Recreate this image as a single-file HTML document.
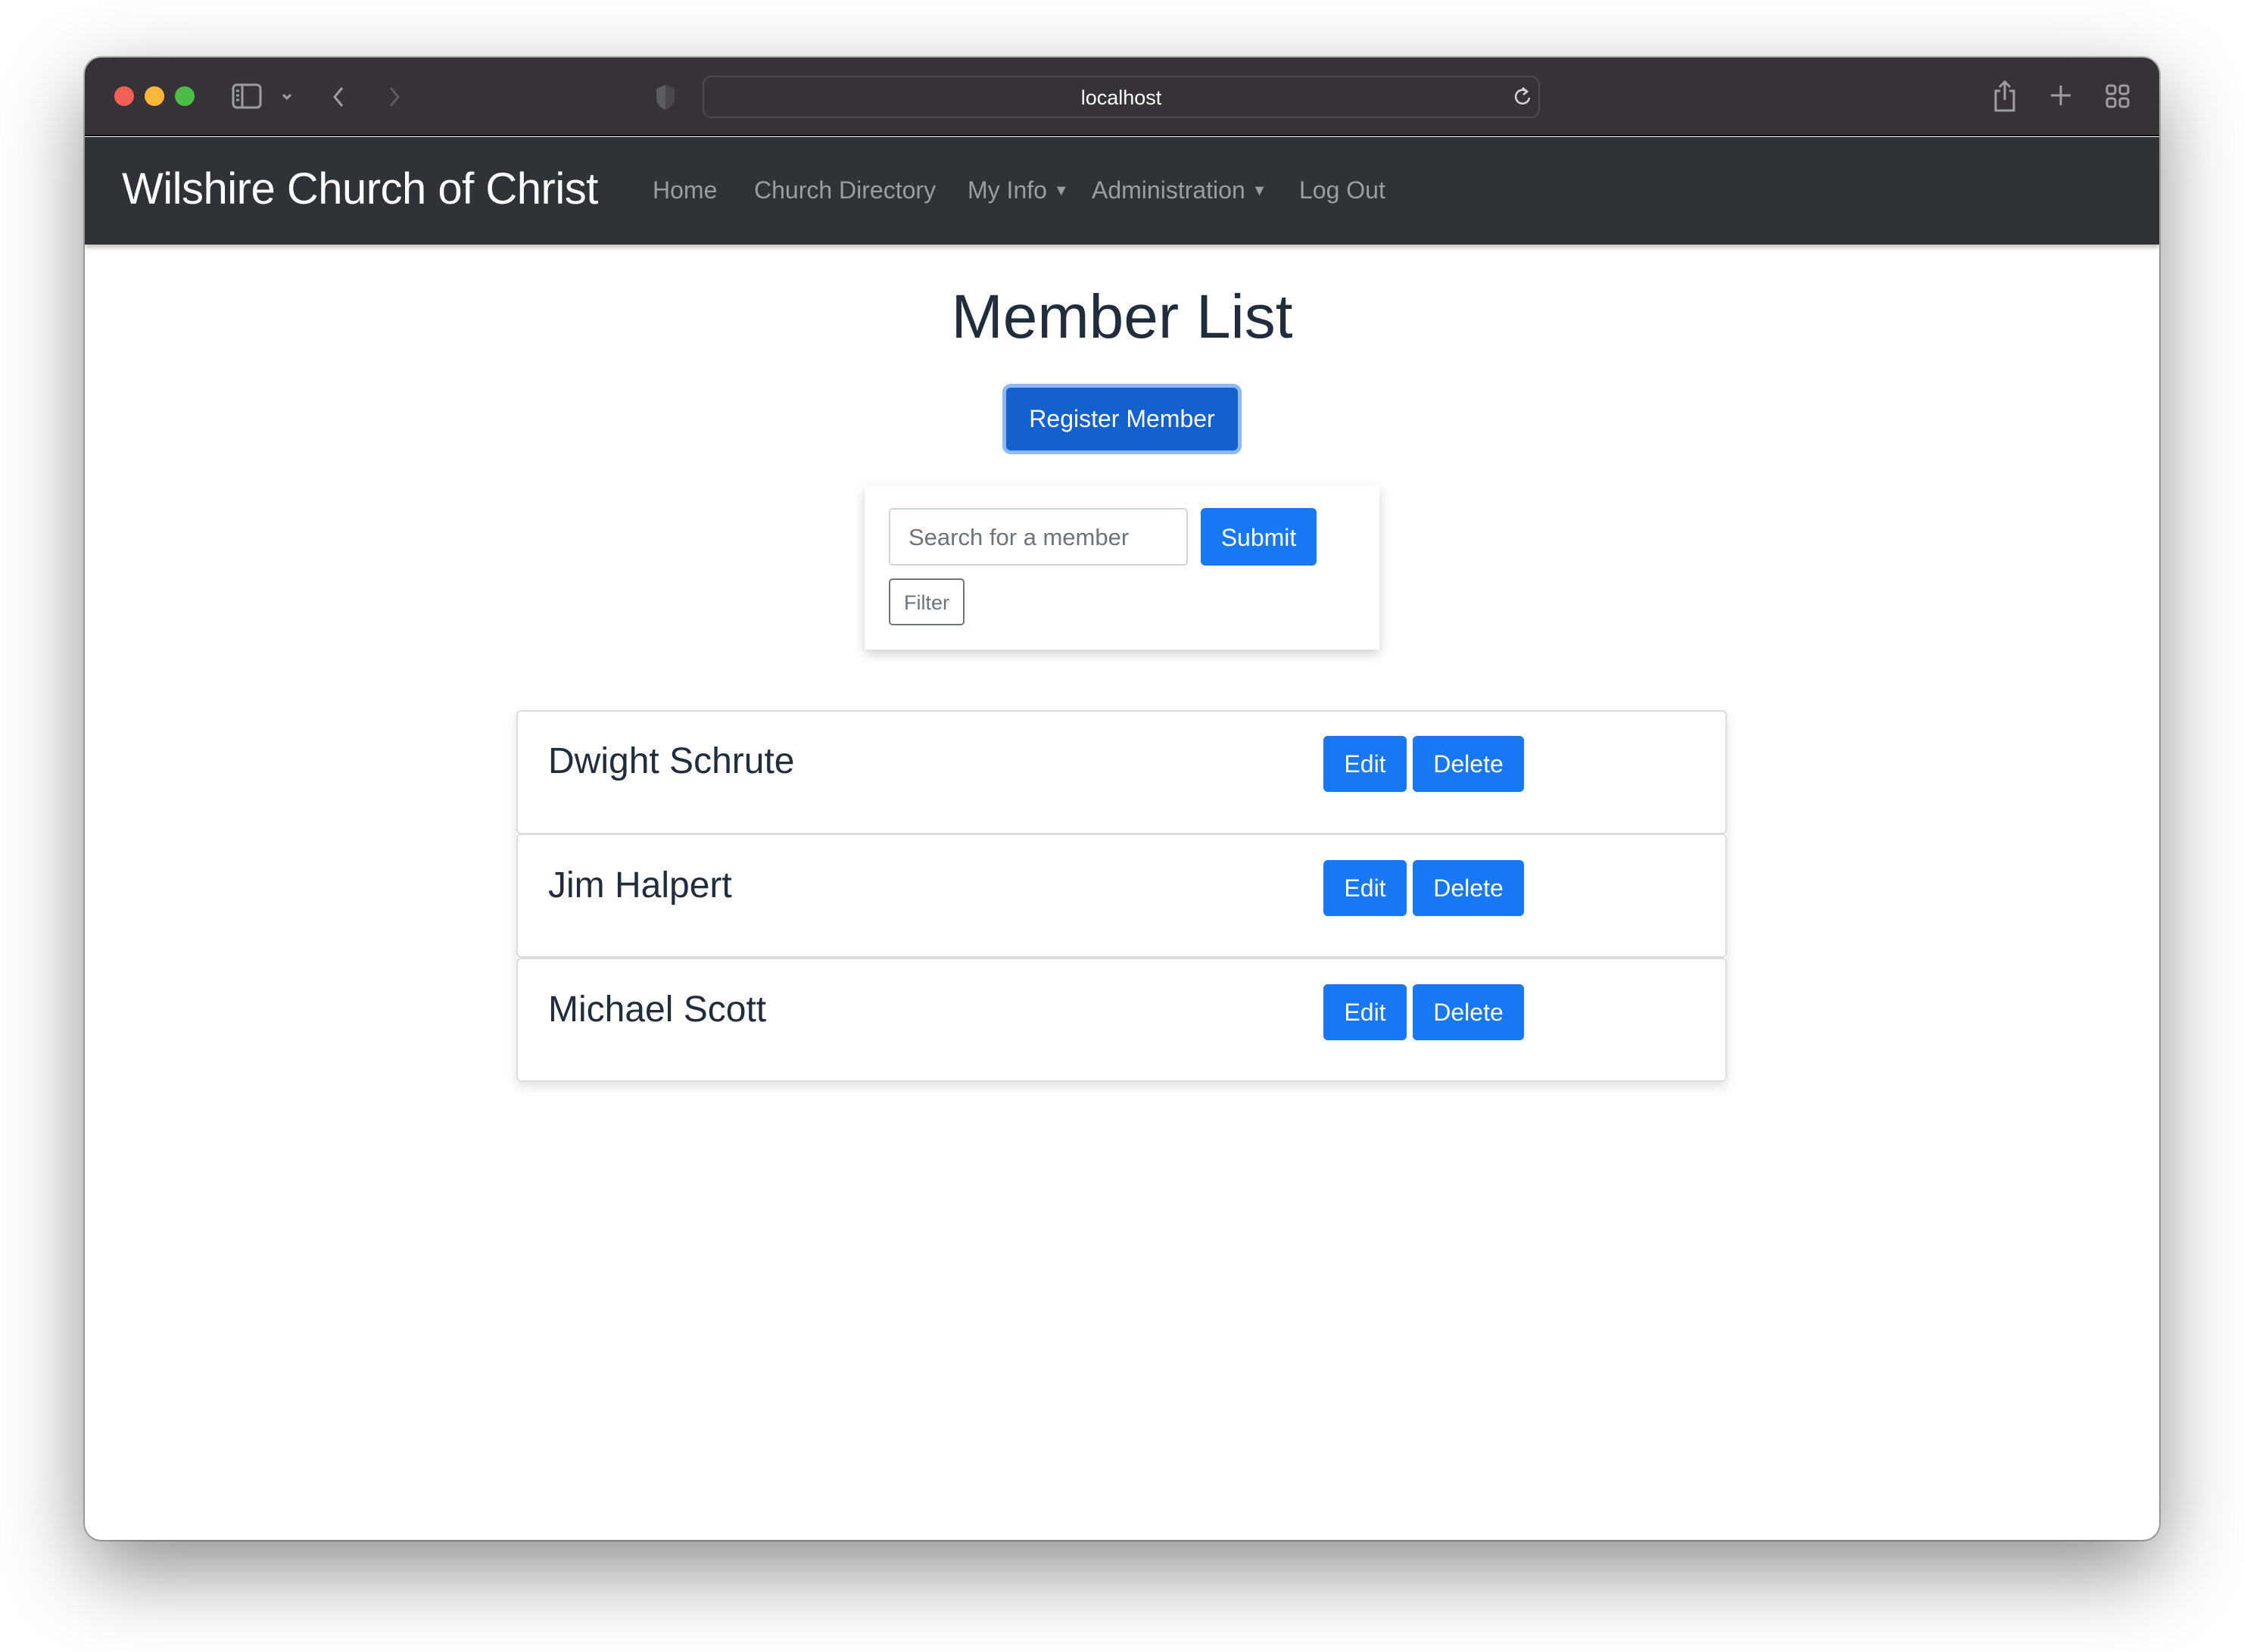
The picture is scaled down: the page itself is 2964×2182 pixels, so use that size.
<!DOCTYPE html>
<html><head><meta charset="utf-8"><style>
*{margin:0;padding:0;box-sizing:border-box}
html,body{width:2964px;height:2182px;overflow:hidden;background:#fff;font-family:"Liberation Sans",sans-serif}
.win{position:absolute;left:112px;top:76px;width:2740px;height:1958px;border-radius:22px;overflow:hidden;background:#fff;box-shadow:0 40px 110px rgba(0,0,0,.45),0 0 0 2px rgba(0,0,0,.25)}
.tb{position:absolute;left:0;top:0;width:100%;height:104px;background:#363238;border-bottom:2px solid #111}
.nav{position:absolute;left:0;top:105px;width:100%;height:142px;background:#2f3236;box-shadow:0 4px 6px rgba(0,0,0,.25)}
.a{position:absolute}
.dot{position:absolute;top:114px;width:26px;height:26px;border-radius:50%}
.navl{position:absolute;top:233px;font-size:32px;color:#9a9da1;white-space:nowrap}
.btn{position:absolute;background:#1877f2;color:#fff;border-radius:6px;display:flex;align-items:center;justify-content:center;font-size:32px}
.card{position:absolute;left:682px;width:1599px;height:164px;border:2px solid #dcdcdc;border-radius:6px;background:#fff}
.name{position:absolute;left:724px;font-size:48px;color:#212d3d}
</style></head><body>
<div class="win">
<div class="tb"></div>
<div class="nav"></div>
</div>
<div class="dot" style="left:151px;background:#f25f56"></div>
<div class="dot" style="left:191px;background:#fbb73a"></div>
<div class="dot" style="left:231px;background:#4bbd45"></div>
<svg class="a" style="left:300px;top:108px" width="140" height="40" viewBox="0 0 140 40" fill="none" stroke="#a09ca3" stroke-width="3">
<rect x="8" y="4" width="36" height="30" rx="5"/><line x1="20" y1="4" x2="20" y2="34"/>
<line x1="12" y1="12" x2="16" y2="12"/><line x1="12" y1="18" x2="16" y2="18"/><line x1="12" y1="24" x2="16" y2="24"/>
<polyline points="74,17 79,22 84,17"/>
</svg>
<svg class="a" style="left:430px;top:108px" width="110" height="40" viewBox="0 0 110 40" fill="none" stroke-width="3">
<polyline points="22,8 12,20 22,32" stroke="#a09ca3"/>
<polyline points="86,8 96,20 86,32" stroke="#5f5b62"/>
</svg>
<svg class="a" style="left:864px;top:108px" width="30" height="40" viewBox="0 0 30 40"><path d="M15 4 L27 9 V22 C27 30 20 35 15 37 C10 35 3 30 3 22 V9 Z" fill="#5e5a61"/><path d="M15 4 L27 9 V22 C27 30 20 35 15 37 Z" fill="#4a464d"/></svg>
<div class="a" style="left:928px;top:100px;width:1106px;height:56px;border:2px solid #4e4a51;border-radius:12px"></div>
<div class="a" style="left:928px;top:114px;width:1106px;text-align:center;font-size:27px;color:#fff">localhost</div>
<svg class="a" style="left:1996px;top:112px" width="30" height="32" viewBox="0 0 30 32" fill="none" stroke="#d9d6db" stroke-width="2.5"><path d="M21 9 A9 9 0 1 0 24 17"/><polyline points="15,4 21,9 16,13"/></svg>
<svg class="a" style="left:2630px;top:104px" width="36" height="46" viewBox="0 0 36 46" fill="none" stroke="#a09ca3" stroke-width="3"><path d="M12 16 H6 V42 H30 V16 H24"/><line x1="18" y1="4" x2="18" y2="28"/><polyline points="11,11 18,4 25,11"/></svg>
<svg class="a" style="left:2706px;top:110px" width="32" height="32" viewBox="0 0 32 32" stroke="#a09ca3" stroke-width="3"><line x1="16" y1="3" x2="16" y2="29"/><line x1="3" y1="16" x2="29" y2="16"/></svg>
<svg class="a" style="left:2780px;top:110px" width="34" height="34" viewBox="0 0 34 34" fill="none" stroke="#a09ca3" stroke-width="3"><rect x="3" y="3" width="11" height="11" rx="3"/><rect x="20" y="3" width="11" height="11" rx="3"/><rect x="3" y="20" width="11" height="11" rx="3"/><rect x="20" y="20" width="11" height="11" rx="3"/></svg>
<div class="a" style="left:161px;top:216px;font-size:58px;color:#fff;white-space:nowrap;letter-spacing:-0.5px">Wilshire Church of Christ</div>
<div class="navl" style="left:862px">Home</div>
<div class="navl" style="left:996px">Church Directory</div>
<div class="navl" style="left:1278px">My Info <span style="font-size:20px;vertical-align:4px">▼</span></div>
<div class="navl" style="left:1442px">Administration <span style="font-size:20px;vertical-align:4px">▼</span></div>
<div class="navl" style="left:1716px">Log Out</div>
<div class="a" style="left:0;width:2964px;top:372px;text-align:center;font-size:82px;color:#212d3d">Member List</div>
<div class="btn" style="left:1329px;top:512px;width:306px;height:83px;background:#1560cf;box-shadow:0 0 0 5px #8fb9f5">Register Member</div>
<div class="a" style="left:1142px;top:641px;width:680px;height:217px;background:#fff;box-shadow:0 6px 14px rgba(0,0,0,.18)"></div>
<div class="a" style="left:1174px;top:671px;width:395px;height:76px;border:2px solid #ced4da;border-radius:5px;font-size:31px;color:#6c737a;padding:19px 0 0 24px">Search for a member</div>
<div class="btn" style="left:1586px;top:671px;width:153px;height:76px;font-size:32px;padding-top:2px">Submit</div>
<div class="a" style="left:1174px;top:764px;width:100px;height:62px;border:2px solid #6c757d;border-radius:5px;font-size:27px;color:#6c757d;text-align:center;line-height:60px">Filter</div>
<div class="a" style="left:682px;top:938px;width:1599px;height:491px;box-shadow:0 6px 14px rgba(0,0,0,.12)"></div>
<div class="card" style="top:938px"></div>
<div class="card" style="top:1101px"></div>
<div class="card" style="top:1265px"></div>
<div class="name" style="top:978px">Dwight Schrute</div>
<div class="name" style="top:1142px">Jim Halpert</div>
<div class="name" style="top:1306px">Michael Scott</div>
<div class="btn" style="left:1748px;top:972px;width:110px;height:74px">Edit</div>
<div class="btn" style="left:1866px;top:972px;width:147px;height:74px">Delete</div>
<div class="btn" style="left:1748px;top:1136px;width:110px;height:74px">Edit</div>
<div class="btn" style="left:1866px;top:1136px;width:147px;height:74px">Delete</div>
<div class="btn" style="left:1748px;top:1300px;width:110px;height:74px">Edit</div>
<div class="btn" style="left:1866px;top:1300px;width:147px;height:74px">Delete</div>
</body></html>
